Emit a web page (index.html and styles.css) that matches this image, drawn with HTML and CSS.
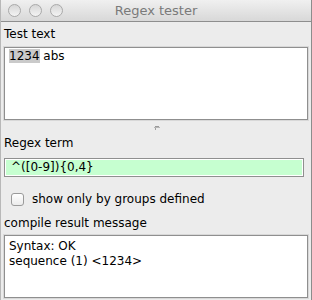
FILE: index.html
```html
<!DOCTYPE html>
<html>
<head>
    <title>Regex tester</title>
    <link rel="stylesheet" href="styles.css">
</head>
<body>
    <div class="window">
        <div class="titlebar">
            <div class="lights">
                <span class="light"></span>
                <span class="light"></span>
                <span class="light"></span>
            </div>
            <div class="title">Regex tester</div>
        </div>
        <div class="content">
            <div class="label first">Test text</div>
            <div class="textbox test-box"><span class="selected">1234</span> abs</div>
            <div class="splitter">
                <svg width="8" height="6" viewBox="0 0 8 6">
                    <rect x="2" y="1" width="4" height="1" fill="#9a9a9a"/>
                    <rect x="1" y="2" width="6" height="1" fill="#b5b5b5"/>
                    <rect x="2" y="3" width="1" height="2" fill="#a0a0a0"/>
                </svg>
            </div>
            <div class="label">Regex term</div>
            <div class="field">^([0-9]){0,4}</div>
            <div class="check">
                <span class="box"></span>
                <span>show only by groups defined</span>
            </div>
            <div class="label">compile result message</div>
            <div class="textbox result-box">Syntax: OK<br>sequence (1) &lt;1234&gt;</div>
        </div>
    </div>
</body>
</html>
```

FILE: styles.css
```css
body {
    margin: 0;
    padding: 0;
    font-family: "DejaVu Sans", sans-serif;
    font-size: 12px;
    color: #000;
    background-color: #ececec;
}
.window {
    width: 312px;
    height: 300px;
    box-sizing: border-box;
    border-left: 1px solid #b8b8b8;
    border-right: 1px solid #8c8c8c;
    background-color: #ececec;
    overflow: hidden;
}
.titlebar {
    position: relative;
    height: 21px;
    border-bottom: 1px solid #8e8e8e;
    background: linear-gradient(#f0f0f0, #d8d8d8);
    display: flex;
    align-items: center;
    justify-content: center;
}
.lights {
    position: absolute;
    left: 7px;
    top: 4px;
    display: flex;
    gap: 8px;
}
.light {
    width: 11px;
    height: 11px;
    border-radius: 50%;
    border: 1px solid #a9a9a9;
    background: linear-gradient(#d6d6d6, #f4f4f4);
}
.title {
    font-size: 13px;
    color: #7a7a7a;
}
.content {
    display: flex;
    flex-direction: column;
    padding: 0 3px 0 3px;
}
.label {
    line-height: 15px;
    height: 15px;
}
.label.first {
    margin-top: 5px;
    margin-bottom: 5px;
}
.textbox {
    background: white;
    border: 1px solid #8f8f8f;
    box-shadow: 0 0 0 1px #d8d8d8;
    padding: 1px 4px;
    line-height: 15px;
}
.test-box {
    height: 69px;
}
.selected {
    background-color: #cacaca;
}
.splitter {
    height: 16px;
    display: flex;
    justify-content: center;
    align-items: center;
    padding-left: 2px;
}
.splitter + .label {
    margin-bottom: 7px;
}
.field {
    height: 17px;
    line-height: 17px;
    border: 1px solid #8f8f8f;
    box-shadow: inset 0 0 0 1px #ffffff;
    background-color: #c6ffd0;
    padding: 0 6px;
    margin: 0 4px 0 0;
}
.check {
    display: flex;
    align-items: center;
    gap: 8px;
    height: 16px;
    margin: 14px 0 9px 7px;
}
.check .box {
    width: 11px;
    height: 11px;
    border: 1px solid #9a9a9a;
    border-radius: 3px;
    background: linear-gradient(#ffffff, #ebebeb);
}
.check + .label {
    margin-bottom: 4px;
}
.result-box {
    height: 57px;
    padding-top: 3px;
}
```
